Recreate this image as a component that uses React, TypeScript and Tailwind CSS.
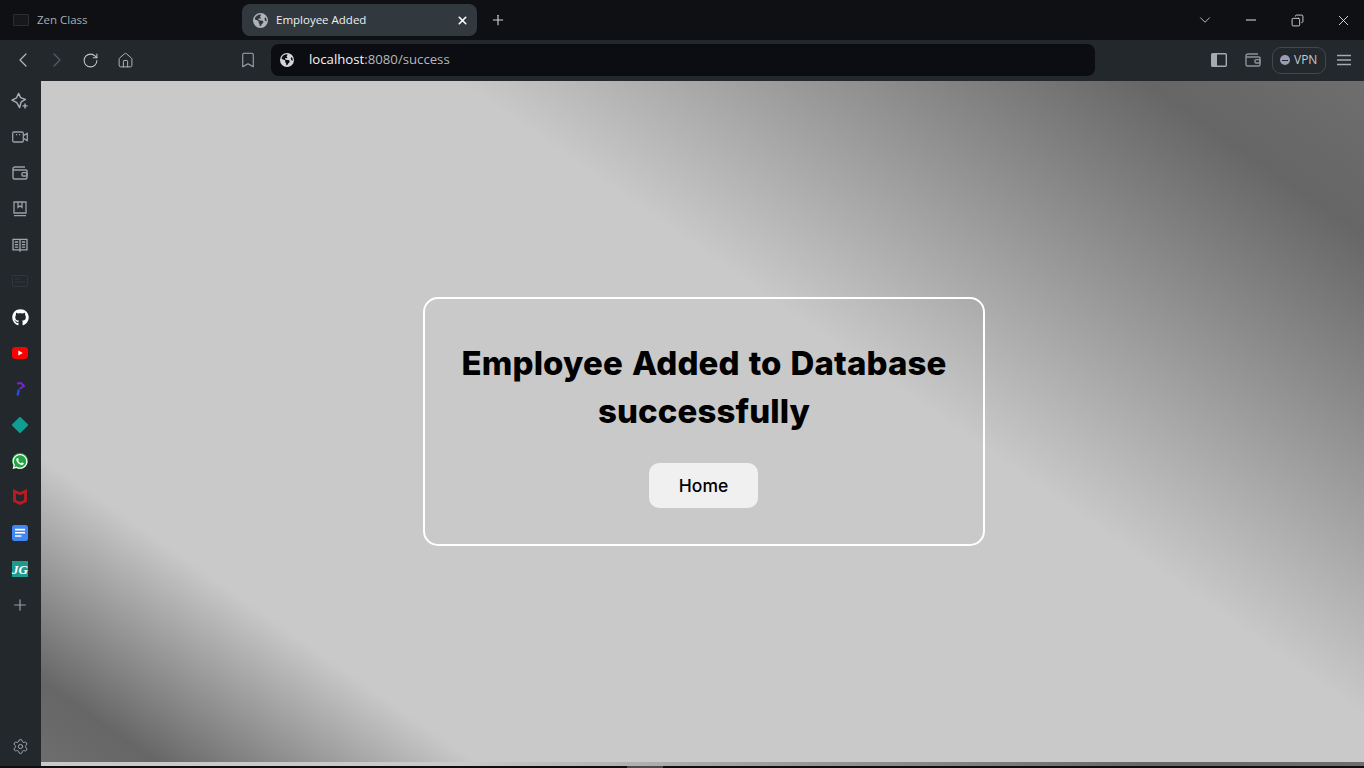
import {
  Bookmark,
  ChevronDown,
  ChevronLeft,
  ChevronRight,
  Copy,
  House,
  Minus,
  Plus,
  RotateCw,
  Settings,
  X,
} from "lucide-react";
import { FaEarthAmericas, FaGithub, FaWhatsapp } from "react-icons/fa6";
import { SiMcafee } from "react-icons/si";

function SparkleAdd() {
  return (
    <svg width="20" height="20" viewBox="0 0 20 20" fill="none" stroke="#a9b0b6" strokeWidth="1.4">
      <path d="M8.6 2.4 10.6 6.6 15.4 8.4 11.2 10.8 9.6 16.6 6.8 11.6 2 9.2 6.6 6.8Z" strokeLinejoin="round" />
      <path d="M15 12.4v5M12.5 14.9h5" />
    </svg>
  );
}

function VideoIcon() {
  return (
    <svg width="16" height="12" viewBox="0 0 16 12" fill="none" stroke="#98a0a6" strokeWidth="1.3">
      <rect x="0.7" y="1" width="10.6" height="10" rx="1.2" />
      <path d="M11.5 4.6 15.3 2.2v7.6L11.5 7.4" strokeLinejoin="round" />
      <path d="M4 3.6h1.2M7 3.6h1.2" strokeWidth="1.4" />
    </svg>
  );
}

function WalletIcon({ color }: { color: string }) {
  return (
    <svg width="16" height="14" viewBox="0 0 16 14" fill="none" stroke={color} strokeWidth="1.4">
      <path d="M13 1H3a2 2 0 0 0-2 2v8.5A1.5 1.5 0 0 0 2.5 13h11a1.5 1.5 0 0 0 1.5-1.5V5a1 1 0 0 0-1-1H1.6" />
      <rect x="10" y="6.6" width="5" height="3.4" rx="1" />
    </svg>
  );
}

function BookIcon() {
  return (
    <svg width="14" height="16" viewBox="0 0 14 16" fill="none" stroke="#98a0a6" strokeWidth="1.3">
      <path d="M1 1h12v11H1zM1 14.6h12" />
      <path d="M5 1v5.4l2-1.6 2 1.6V1" />
    </svg>
  );
}

function OpenBookIcon() {
  return (
    <svg width="16" height="16" viewBox="0 0 16 16" fill="none" stroke="#a0a7ad" strokeWidth="1.3">
      <path d="M8 2.4H1v10.4h7m0-10.4h7v10.4H8m0-10.4v12.4" />
      <path d="M2.8 5h3.4M2.8 7.6h3.4M2.8 10.2h3.4M9.8 5h3.4M9.8 7.6h3.4M9.8 10.2h3.4" />
    </svg>
  );
}

function FadedCard() {
  return (
    <svg width="16" height="12" viewBox="0 0 16 12" fill="none" stroke="#30363b" strokeWidth="1">
      <rect x="0.5" y="0.5" width="15" height="11" rx="1" />
      <path d="M3 4h5M3 7h10" />
    </svg>
  );
}

function YoutubeTile() {
  return (
    <svg width="16" height="12" viewBox="0 0 16 12">
      <rect width="16" height="12" rx="3.5" fill="#f00" />
      <path d="M6.3 3.4 10.8 6 6.3 8.6Z" fill="#fff" />
    </svg>
  );
}

function HookLogo() {
  return (
    <svg width="10" height="14" viewBox="0 0 10 14" fill="none">
      <path d="M2 1.4 6 1l3 3-4.6 3" stroke="#7b22d6" strokeWidth="2" />
      <path d="M3.8 7.6 2.6 13.6" stroke="#2450d8" strokeWidth="2.4" />
    </svg>
  );
}

function DocsTile() {
  return (
    <svg width="16" height="16" viewBox="0 0 16 16">
      <rect width="16" height="16" rx="2.5" fill="#4285f4" />
      <path d="M3 3.8h10v1.6H3zM3 7h10v1.6H3zM3 10.2h6.5v1.6H3z" fill="#fff" />
    </svg>
  );
}

function SidePanelIcon() {
  return (
    <svg width="16" height="14" viewBox="0 0 16 14">
      <rect x="0.7" y="0.7" width="14.6" height="12.6" rx="1" fill="none" stroke="#a3abb2" strokeWidth="1.4" />
      <rect x="1" y="1" width="5" height="12" fill="#a3abb2" />
    </svg>
  );
}

function MenuLines() {
  return (
    <svg width="14" height="12" viewBox="0 0 14 12" fill="none" stroke="#a3abb2" strokeWidth="1.3">
      <path d="M0 1.5h14M0 6h14M0 10.5h14" />
    </svg>
  );
}

function NavButton({ children }: { children: React.ReactNode }) {
  return <div className="w-[34px] h-full flex items-center justify-center">{children}</div>;
}

function RailItem({ children }: { children: React.ReactNode }) {
  return <div className="h-9 w-full flex items-center justify-center shrink-0">{children}</div>;
}

export default function App() {
  return (
    <div className="w-[1364px] h-[768px] overflow-hidden flex flex-col bg-[#0e0e0e] font-['Open_Sans',sans-serif]">
      {/* Tab strip */}
      <div className="h-10 shrink-0 bg-[#0e1014] flex items-center">
        <div className="w-[242px] flex items-center pl-[13px]">
          <div className="w-[16px] h-[12px] rounded-[1px] border border-[#2a2d31] bg-[#16181b]"></div>
          <span className="ml-[8px] text-[11.5px] text-[#a8adb2]">Zen Class</span>
        </div>
        <div className="w-[235px] h-8 rounded-lg bg-[#31393f] flex items-center pl-[11px] pr-[8px]">
          <FaEarthAmericas className="w-[15px] h-[15px] text-[#aeb4b9]" />
          <span className="ml-[8px] text-[11.5px] text-[#eef0f1]">Employee Added</span>
          <X className="ml-auto text-white" size={13} strokeWidth={3} />
        </div>
        <div className="ml-1 w-[34px] flex justify-center">
          <Plus className="text-[#cfd3d6]" size={16} strokeWidth={1.7} />
        </div>
        <div className="ml-auto flex items-center h-full text-[#f0f1f2]">
          <div className="w-[46px] flex justify-center">
            <ChevronDown size={18} strokeWidth={1} />
          </div>
          <div className="w-[46px] flex justify-center">
            <Minus size={16} strokeWidth={1.4} />
          </div>
          <div className="w-[46px] flex justify-center">
            <Copy className="-scale-x-100" size={13} strokeWidth={1.5} />
          </div>
          <div className="w-[44px] pl-[2px] flex justify-center">
            <X size={17} strokeWidth={1.2} />
          </div>
        </div>
      </div>

      {/* Toolbar */}
      <div className="h-[41px] shrink-0 bg-[#22282c] flex items-center pl-[6px] pb-px">
        <NavButton>
          <ChevronLeft className="text-[#b4b9bd]" size={24} strokeWidth={1.2} />
        </NavButton>
        <NavButton>
          <ChevronRight className="text-[#565d62]" size={24} strokeWidth={1.2} />
        </NavButton>
        <NavButton>
          <RotateCw className="text-[#c0c5c9] -translate-x-px" size={17} strokeWidth={1.5} />
        </NavButton>
        <NavButton>
          <House className="text-[#b0b5ba]" size={17} strokeWidth={1.4} />
        </NavButton>
        <div className="ml-[89px] w-[34px] flex justify-center">
          <Bookmark className="text-[#a3abb2]" size={18} strokeWidth={1.4} />
        </div>
        <div className="ml-[6px] w-[824px] h-8 rounded-lg bg-[#0b0d12] flex items-center pl-[9px]">
          <FaEarthAmericas className="w-[14px] h-[14px] text-[#d4d7da]" />
          <span className="ml-[15px] text-[13.2px] text-[#b4b8bc]">
            <span className="text-[#f4f5f6]">localhost</span>:8080/success
          </span>
        </div>
        <div className="ml-[107px] w-[34px] flex justify-center">
          <SidePanelIcon />
        </div>
        <div className="w-[34px] flex justify-center">
          <WalletIcon color="#8c949a" />
        </div>
        <div className="ml-[2px] w-[54px] h-[27px] rounded-[9px] border border-[#41484d] flex items-center pl-[7px] gap-[4px]">
          <div className="w-[10px] h-[10px] rounded-full bg-[#989db4] flex items-center justify-center">
            <div className="w-[6px] h-px bg-[#22282c]"></div>
          </div>
          <span className="text-[12px] font-medium text-[#c4c9cd]">VPN</span>
        </div>
        <div className="ml-px w-[34px] flex justify-center">
          <MenuLines />
        </div>
      </div>

      <div className="h-[685px] shrink-0 flex">
        {/* Side rail */}
        <div className="w-[41px] shrink-0 bg-[#22282c] flex flex-col items-center pt-[2px] pb-[2px] pr-px">
          <RailItem>
            <SparkleAdd />
          </RailItem>
          <RailItem>
            <VideoIcon />
          </RailItem>
          <RailItem>
            <WalletIcon color="#98a0a6" />
          </RailItem>
          <RailItem>
            <BookIcon />
          </RailItem>
          <RailItem>
            <OpenBookIcon />
          </RailItem>
          <RailItem>
            <FadedCard />
          </RailItem>
          <RailItem>
            <FaGithub className="text-white" size={17} />
          </RailItem>
          <RailItem>
            <YoutubeTile />
          </RailItem>
          <RailItem>
            <HookLogo />
          </RailItem>
          <RailItem>
            <div className="w-3 h-3 rotate-45 rounded-[1px] bg-[#0f9d94]"></div>
          </RailItem>
          <RailItem>
            <div className="w-[16px] h-[16px] rounded-full bg-[#25a244] flex items-center justify-center">
              <FaWhatsapp className="text-white" size={17} />
            </div>
          </RailItem>
          <RailItem>
            <SiMcafee className="text-[#b81c22]" size={16} />
          </RailItem>
          <RailItem>
            <DocsTile />
          </RailItem>
          <RailItem>
            <div className="w-4 h-4 bg-[#1f9a8f] flex items-center justify-center font-['Liberation_Serif',serif] italic font-bold text-[13px] leading-none text-white">
              JG
            </div>
          </RailItem>
          <RailItem>
            <Plus className="text-[#98a0a6]" size={18} strokeWidth={1.6} />
          </RailItem>
          <div className="mt-auto h-9 w-full flex items-center justify-center">
            <Settings className="text-[#a3abb2]" size={17} strokeWidth={1.4} />
          </div>
        </div>

        {/* Page */}
        <div className="flex-1 flex items-start justify-center bg-[linear-gradient(35deg,#6e6e6e_0%,#666666_5%,#c9c9c9_19%,#c9c9c9_60.5%,#666666_90.5%,#6e6e6e_100%)] bg-[length:100%_681px]">
          <div className="ml-[3px] mt-[216px] w-[562px] h-[249px] border-2 border-white rounded-[15px] flex flex-col items-center pt-[40px]">
            <h1 className="text-[33px] leading-[48px] font-extrabold text-black text-center tracking-[0.1px] [word-spacing:1.7px] font-['Inter',sans-serif]">
              Employee Added to Database
              <br />
              successfully
            </h1>
            <button className="mt-[28px] -ml-px w-[109px] h-[45px] pt-px rounded-[10px] bg-[#f0f0f0] text-[17.5px] font-medium text-black font-['Inter',sans-serif]">
              Home
            </button>
          </div>
        </div>
      </div>

      {/* Scrollbar strip */}
      <div className="h-[2px] shrink-0 pl-[627px]">
        <div className="w-9 h-full bg-[#4a4a4a]"></div>
      </div>
    </div>
  );
}
